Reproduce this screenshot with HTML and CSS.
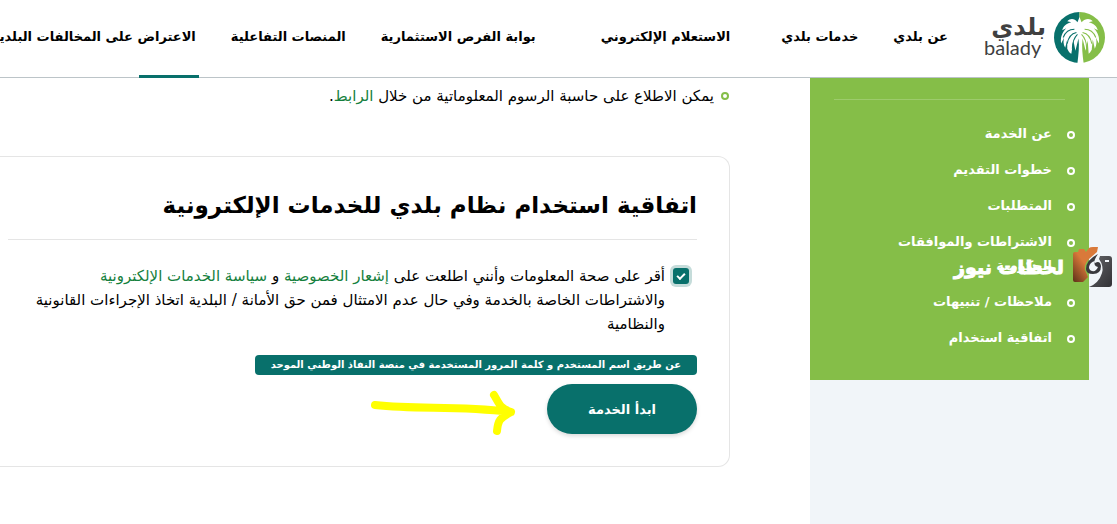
FILE: index.html
```
<!DOCTYPE html>
<html lang="ar" dir="rtl">
<head>
  <meta charset="UTF-8">
  <title>بلدي</title>
  <link rel="stylesheet" href="styles.css">
</head>
<body>

  <header class="header">
    <a class="logo" href="#">
      <svg class="logo-mark" viewBox="0 0 50 50" aria-hidden="true">
        <path d="M25 0a25 25 0 0 0 0 50z" fill="#08706b"/>
        <path d="M25 0a25 25 0 0 1 0 50z" fill="#85be48"/>
        <path d="M25 5l2 5c4-4 8-4 11-1l-4 1c5 1 8 4 9 8l-4-2c4 4 6 9 5 15l-3-6c1 4 1 7-1 11l-2-9-1 10c-1 2-2 3-3 4l-1-13-2 10-3-12c-1 8 0 16 1 24h-6c1-8 2-16 1-24l-3 12-2-10-2 13c-2-1-3-3-4-5l0-9-2 8c-2-3-2-7-1-10l-3 6c-1-6 1-11 5-15l-4 2c1-4 4-7 9-8l-4-1c3-3 7-3 10 1z" fill="#fff"/>
        <g fill="none" stroke-width="1">
          <path d="M22 20c-5 1-8 5-9 11M23 22c-3 3-5 7-5 14M20 17c-5 0-9 3-11 8" stroke="#08706b"/>
          <path d="M28 20c5 1 8 5 9 11M27 22c3 3 5 7 5 14M30 17c5 0 9 3 11 8" stroke="#85be48"/>
        </g>
      </svg>
      <span class="logo-text">
        <span class="logo-ar">بلدي</span>
        <span class="logo-en" dir="ltr">balady</span>
      </span>
    </a>
    <nav class="nav">
      <a href="#">عن بلدي</a>
      <a class="wide" href="#">خدمات بلدي</a>
      <a class="wider" href="#">الاستعلام الإلكتروني</a>
      <a href="#">بوابة الفرص الاستثمارية</a>
      <a href="#">المنصات التفاعلية</a>
      <a class="active" href="#">الاعتراض على المخالفات البلدية</a>
    </nav>
  </header>

  <div class="page">
    <aside class="side">
      <ul class="side-menu">
        <li><a href="#">عن الخدمة</a></li>
        <li><a href="#">خطوات التقديم</a></li>
        <li><a href="#">المتطلبات</a></li>
        <li><a href="#">الاشتراطات والموافقات الحكومية</a></li>
        <li><a href="#">ملاحظات / تنبيهات</a></li>
        <li><a href="#">اتفاقية استخدام</a></li>
      </ul>
    </aside>

    <main class="main">
      <ul class="notes">
        <li>يمكن الاطلاع على حاسبة الرسوم المعلوماتية من خلال <a href="#">الرابط</a>.</li>
      </ul>

      <section class="card">
        <h2>اتفاقية استخدام نظام بلدي للخدمات الإلكترونية</h2>
        <div class="agree">
          <input type="checkbox" id="agree" checked>
          <label for="agree">أقر على صحة المعلومات وأنني اطلعت على <a href="#">إشعار الخصوصية</a> و <a href="#">سياسة الخدمات الإلكترونية</a><br>والاشتراطات الخاصة بالخدمة وفي حال عدم الامتثال فمن حق الأمانة / البلدية اتخاذ الإجراءات القانونية والنظامية</label>
        </div>
        <p class="hint">عن طريق اسم المستخدم و كلمة المرور المستخدمة في منصة النفاذ الوطني الموحد</p>
        <button class="start" type="button">ابدأ الخدمة</button>
        <svg class="arrow" viewBox="0 0 146 46" aria-hidden="true">
          <path d="M5 15c45 5 80 0 136 7M124 5c6 10 6 13 17 17-11 6-13 8-14 19" fill="none" stroke="#ff0" stroke-width="8" stroke-linecap="round" stroke-linejoin="round"/>
        </svg>
      </section>
    </main>
  </div>

  <div class="watermark">
    <svg viewBox="0 0 40 42" aria-hidden="true">
      <defs>
        <linearGradient id="orange" x1="1" y1="0" x2="0" y2="1">
          <stop offset=".5" stop-color="#d9793a"/>
          <stop offset="1" stop-color="#5c2f18"/>
        </linearGradient>
        <linearGradient id="dark" x1="0" y1="0" x2="1" y2="1">
          <stop offset="0" stop-color="#66666a"/>
          <stop offset="1" stop-color="#323236"/>
        </linearGradient>
      </defs>
      <path d="M1 8q0-2 2-2h3l1-3h5l2 3 3-4q1-1 4-1h5l-1 5-8 7q-5 5-4 11l3 7-5 5H3q-2 0-2-2z" fill="url(#orange)"/>
      <path d="M14 23q0-9 12-15-5 7-3 9 5-3 6 3 0 8-8 8-7 0-7-5z" fill="#39393d"/>
      <path d="M27 13l1-3h9q3 0 3 3v25q0 3-3 3H17q10-4 13-14 2-7-3-14z" fill="url(#dark)"/>
      <path d="M17 21q1-5 6-6-2 5 3 6-2 5-6 4-3-1-3-4z" fill="#f1f5f9"/>
      <rect x="33" y="14" width="4" height="2" fill="#f1f5f9"/>
    </svg>
    <span>لحظات نيوز</span>
  </div>

</body>
</html>
```
FILE: styles.css
```
*, *::before, *::after {
  box-sizing: border-box;
}
body {
  margin: 0;
  font-family: 'DejaVu Sans', sans-serif;
  font-size: 15px;
  line-height: 24px;
  color: #000;
  background: #fff;
  overflow: hidden;
}
a {
  color: #15803d;
  text-decoration: none;
}
.header {
  display: flex;
  height: 78px;
  padding-right: 12px;
  border-bottom: 1px solid #bcc4c8;
}
.logo {
  display: flex;
  align-items: center;
  gap: 8px;
  height: 74px;
  color: #404040;
}
.logo-mark {
  width: 51px;
  height: 51px;
}
.logo-text {
  display: flex;
  flex-direction: column;
  width: 62px;
}
.logo-ar {
  font-size: 24px;
  font-weight: bold;
  line-height: 20px;
}
.logo-en {
  font-family: Lato, sans-serif;
  font-size: 20px;
  line-height: 20px;
}
.nav {
  display: flex;
  gap: 35px;
  margin-right: 36px;
  font-size: 13px;
  white-space: nowrap;
}
.nav a {
  position: relative;
  color: #000;
  font-weight: bold;
  line-height: 74px;
}
.nav .wide {
  margin-left: 16px;
}
.nav .wider {
  margin-left: 30px;
}
.nav .active::after {
  content: "";
  position: absolute;
  right: -3px;
  bottom: -1px;
  width: 60px;
  height: 3px;
  background: #08706b;
}
.page {
  display: flex;
  min-height: 446px;
}
.side {
  flex: none;
  width: 307px;
  padding-right: 28px;
  background: #f1f5f9;
}
.side-menu {
  margin: 0;
  padding: 21px 24px 18px;
  list-style: none;
  background: #85be48;
  font-size: 13px;
}
.side-menu::before {
  content: "";
  display: block;
  height: 1px;
  margin-bottom: 22px;
  background: #9dcb6c;
}
.side-menu li {
  position: relative;
  margin-bottom: 12px;
  padding: 0 13px 0 40px;
}
.side-menu li::before {
  content: "";
  position: absolute;
  top: 9px;
  right: -10px;
  width: 8px;
  height: 8px;
  border: 2px solid #fff;
  border-radius: 50%;
}
.side-menu a {
  color: #fff;
  font-weight: bold;
}
.main {
  flex: 1;
  padding: 6px 80px 0 0;
}
.notes {
  margin: 0;
  padding: 0;
  list-style: none;
}
.notes li {
  position: relative;
  padding-right: 16px;
}
.notes li::before {
  content: "";
  position: absolute;
  top: 8px;
  right: 1px;
  width: 8px;
  height: 8px;
  border: 2px solid #85be48;
  border-radius: 50%;
}
.card {
  position: relative;
  margin-top: 48px;
  padding: 24px 32px 32px 8px;
  border: 1px solid #e5e5e5;
  border-left: 0;
  border-radius: 0 12px 12px 0;
}
.card h2 {
  margin: 0 0 24px;
  padding-bottom: 10px;
  border-bottom: 1px solid #e5e5e5;
  font-size: 23px;
  line-height: 48px;
  white-space: nowrap;
}
.agree {
  display: flex;
  gap: 8px;
}
.agree input {
  appearance: none;
  display: grid;
  place-items: center;
  flex: none;
  width: 16px;
  height: 16px;
  margin: 4px 8px 0 0;
  border-radius: 3px;
  background: #08706b;
  box-shadow: 0 0 0 3px #c5dcda;
}
.agree input:checked::before {
  content: "";
  width: 8px;
  height: 5px;
  border: solid #fff;
  border-width: 0 0 2px 2px;
  transform: translateY(-1px) rotate(-45deg);
}
.hint {
  width: fit-content;
  margin: 19px 0 9px;
  padding: 0 16px;
  border-radius: 4px;
  color: #fff;
  background: #08706b;
  font-size: 10px;
  font-weight: bold;
  line-height: 20px;
}
.start {
  display: block;
  width: 150px;
  height: 50px;
  border: 0;
  border-radius: 25px;
  color: #fff;
  background: #08706b;
  box-shadow: 0 2px 4px #00000026;
  font: bold 13px 'DejaVu Sans', sans-serif;
}
.arrow {
  position: absolute;
  right: 213px;
  bottom: 30px;
  width: 146px;
  height: 46px;
}
.watermark {
  position: absolute;
  top: 246px;
  right: 5px;
  display: flex;
  align-items: center;
  gap: 8px;
  color: #fff;
  font-size: 19px;
  font-weight: bold;
  -webkit-text-stroke: 1px #fff;
}
.watermark svg {
  width: 40px;
  height: 42px;
}
```
